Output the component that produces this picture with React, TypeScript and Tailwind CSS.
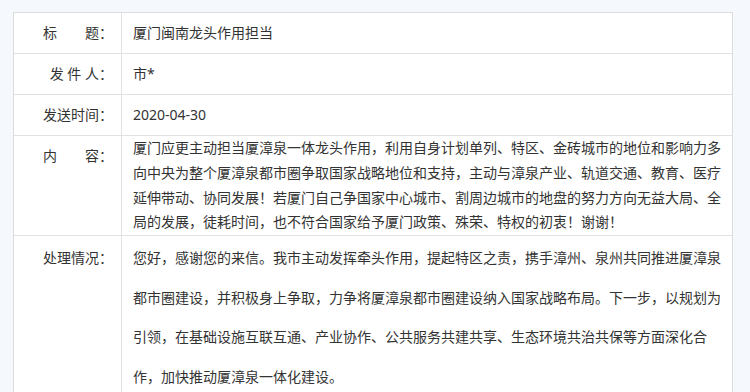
import React from 'react';

const font = { fontFamily: '"Noto Sans", "Noto Sans CJK SC", sans-serif' };

interface Row {
  label: string;
  value: string;
}

const shortRows: Row[] = [
  { label: '标　　题：', value: '厦门闽南龙头作用担当' },
  { label: '发 件 人：', value: '市*' },
  { label: '发送时间：', value: '2020-04-30' },
];

const content =
  '厦门应更主动担当厦漳泉一体龙头作用，利用自身计划单列、特区、金砖城市的地位和影响力多向中央为整个厦漳泉都市圈争取国家战略地位和支持，主动与漳泉产业、轨道交通、教育、医疗延伸带动、协同发展！若厦门自己争国家中心城市、割周边城市的地盘的努力方向无益大局、全局的发展，徒耗时间，也不符合国家给予厦门政策、殊荣、特权的初衷！谢谢！';

const reply =
  '您好，感谢您的来信。我市主动发挥牵头作用，提起特区之责，携手漳州、泉州共同推进厦漳泉都市圈建设，并积极身上争取，力争将厦漳泉都市圈建设纳入国家战略布局。下一步，以规划为引领，在基础设施互联互通、产业协作、公共服务共建共享、生态环境共治共保等方面深化合作，加快推动厦漳泉一体化建设。';

export default function App() {
  return (
    <div className="h-[392px] w-[750px] overflow-hidden bg-[#f5f9fe] pt-[12px] pl-[13px] text-[14px] text-[#333]" style={font}>
      <div className="w-[720px] border border-[#dcdcdc] bg-white">
        {/* short rows */}
        {shortRows.map((row, i) => (
          <div key={row.label} className={`flex ${i > 0 ? 'border-t border-[#e2e2e2]' : ''}`}>
            <div className="w-[108px] shrink-0 border-r border-[#e2e2e2] pr-[8px] text-right leading-[40px] whitespace-pre">
              {row.label}
            </div>
            <div className="flex-1 pl-[11px] pr-[10px] leading-[40px]">{row.value}</div>
          </div>
        ))}

        {/* 内容 */}
        <div className="flex border-t border-[#e2e2e2]">
          <div className="w-[108px] shrink-0 border-r border-[#e2e2e2] pr-[8px] text-right leading-[40px] whitespace-pre">
            内　　容：
          </div>
          <div className="flex-1 pl-[11px] pr-[10px] leading-[24.75px]">{content}</div>
        </div>

        {/* 处理情况 */}
        <div className="flex border-t border-[#e2e2e2]">
          <div className="w-[108px] shrink-0 border-r border-[#e2e2e2] pt-[2px] pr-[8px] text-right leading-[40px] whitespace-pre">
            处理情况：
          </div>
          <div className="flex-1 pt-[2px] pb-[20px] pl-[11px] pr-[10px] leading-[39.7px]">{reply}</div>
        </div>
      </div>
    </div>
  );
}
